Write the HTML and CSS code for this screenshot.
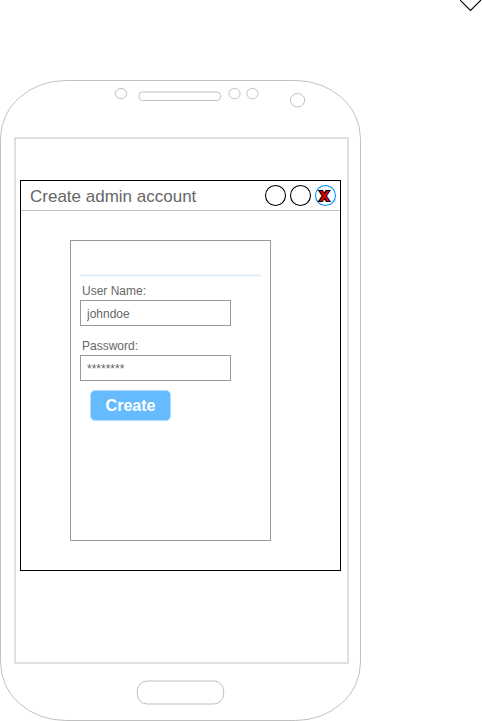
FILE: index.html
```html
<!DOCTYPE html>
<html lang="en">
<head>
<meta charset="utf-8">
<title>Create admin account</title>
<link rel="stylesheet" href="styles.css">
</head>
<body>
<svg class="chevron" width="22" height="13" viewBox="460 0 22 13"><path d="M460 0L470.5 10.500L481 0" fill="none" stroke="#000" stroke-width="1.100"/></svg>
<main class="phone">
  <svg class="phone-frame" width="361" height="641" viewBox="0 80 361 641" fill="none" stroke="#c0c0c0">
    <rect x=".5" y="80.5" width="360" height="640" rx="65" ry="58"/>
    <rect x="15" y="138" width="333" height="525"/>
    <rect x="139" y="92" width="81.500" height="8.500" rx="3.500"/>
    <ellipse cx="121" cy="93.600" rx="5.600" ry="5.200"/>
    <ellipse cx="234.500" cy="93.600" rx="5.600" ry="5.200"/>
    <ellipse cx="252.500" cy="93.600" rx="5.600" ry="5.200"/>
    <ellipse cx="297.500" cy="100.200" rx="7.200" ry="6.700"/>
    <rect x="137.300" y="681" width="86.400" height="23" rx="10"/>
  </svg>
  <section class="window">
    <header class="titlebar">
      <h1 class="title">Create admin account</h1>
      <div class="controls">
        <svg class="control" width="21" height="21"><circle cx="10.5" cy="10.5" r="10"/></svg>
        <svg class="control" width="21" height="21"><circle cx="10.5" cy="10.5" r="10"/></svg>
        <svg class="control control-close" width="21" height="21"><circle cx="10.5" cy="10.5" r="10"/><text class="close-mark" x="9.200" y="16" text-anchor="middle">x</text></svg>
      </div>
    </header>
    <form class="form">
      <div class="divider"></div>
      <label class="label" for="user">User Name:</label>
      <input class="field" id="user" type="text" value="johndoe">
      <label class="label" for="pass">Password:</label>
      <input class="field" id="pass" type="text" value="********">
      <button class="create" type="button">Create</button>
    </form>
  </section>
</main>
</body>
</html>
```
FILE: styles.css
```css
* { box-sizing: border-box; }
body {
  margin: 0;
  background: #fff;
  font-family: "Liberation Sans", Arial, sans-serif;
  color: #666;
}
.chevron { display: block; margin-left: 460px; }
.phone {
  position: relative;
  width: 361px;
  height: 641px;
  margin-top: 67px;
  padding: 100px 20px 0;
}
.phone-frame { position: absolute; top: 0; left: 0; }
.window {
  position: relative;
  width: 321px;
  height: 391px;
  border: 1px solid #000;
}
.titlebar {
  display: flex;
  justify-content: space-between;
  height: 30px;
  padding: 4px 4px 0 9px;
  border-bottom: 1px solid #c0c0c0;
}
.title { margin: 0; font-size: 17px; line-height: 23px; font-weight: 400; }
.controls { display: flex; gap: 4px; }
.control { display: block; overflow: visible; fill: none; stroke: #000; stroke-width: 1.1; }
.control-close { stroke: #008cff; }
.close-mark {
  font: bold 18px "Liberation Sans", Arial, sans-serif;
  fill: #df0101;
  stroke: #000;
  stroke-width: 2;
  paint-order: stroke;
}
.form {
  display: flex;
  flex-direction: column;
  align-items: flex-start;
  width: 201px;
  height: 301px;
  margin: 29px 0 0 49px;
  padding: 33px 9px 0;
  border: 1px solid #999;
}
.divider {
  width: 181px;
  height: 3px;
  background: #ddeeff;
  border: solid #eef6ff;
  border-width: 1px 0;
}
.label { height: 23px; padding: 6px 0 0 2px; font-size: 12px; line-height: 16px; }
.field {
  width: 151px;
  height: 26px;
  margin: 0 0 6px;
  padding: 1px 6px 0;
  border: 1px solid #999;
  border-radius: 0;
  background: #fff;
  color: #666;
  font: 12px "Liberation Sans", Arial, sans-serif;
}
.create {
  width: 81px;
  height: 31px;
  margin: 3px 0 0 10px;
  padding: 0;
  border: 1px solid #b2ddff;
  border-radius: 5px;
  background: #66bbff;
  color: #fff;
  font: bold 16px "Liberation Sans", Arial, sans-serif;
}
```
